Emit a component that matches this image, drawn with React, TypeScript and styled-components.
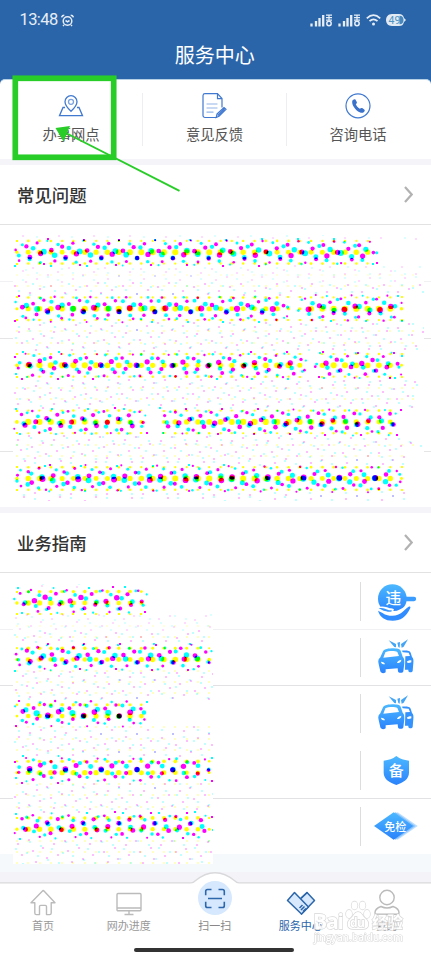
import React from 'react';
import styled, { createGlobalStyle } from 'styled-components';

const Global = createGlobalStyle`
  * { box-sizing: border-box; }
  body { margin: 0; background: #fff; font-family: "Noto Sans CJK SC", "Noto Sans", sans-serif; }
`;

const Screen = styled.div`
  position: relative;
  width: 431px;
  height: 955px;
  overflow: hidden;
  display: flex;
  flex-direction: column;
  background: #f5f9fb;
`;

const Header = styled.header`
  flex: none;
  height: 79px;
  background: #2b65a9;
  color: #fff;
`;

const StatusBar = styled.div`
  display: flex;
  align-items: center;
  height: 40px;
  padding: 0 25px 0 19.5px;
  color: #e6edf5;
`;

const Clock = styled.span`
  font: 400 16.5px/20px Roboto, sans-serif;
  letter-spacing: -0.6px;
  margin-right: 3.5px;
`;

const StatusIcons = styled.div`
  display: flex;
  align-items: center;
  gap: 5px;
  margin-left: auto;
`;

const Title = styled.h1`
  margin: 0;
  padding-right: 1.5px;
  font-size: 20px;
  font-weight: 400;
  line-height: 30px;
  text-align: center;
`;

const CardBack = styled.div`
  flex: none;
  background: #2b65a9;
`;

const QuickActions = styled.nav`
  display: grid;
  grid-template-columns: 143px 144px 1fr;
  height: 80px;
  padding: 13px 1px 0 0;
  background: #fff;
  border-top: 1px solid #b5d0e4;
  border-radius: 5px 5px 0 0;
`;

const QuickItem = styled.div<{ $divided?: boolean }>`
  display: flex;
  flex-direction: column;
  align-items: center;
  gap: 3px;
  height: 53px;
  border-right: 1px solid ${(p) => (p.$divided ? '#eeeef1' : 'transparent')};
  color: #555;
  font-size: 14.3px;
  line-height: 24px;
`;

const Gap = styled.div`
  flex: none;
  height: 6px;
  background: #f4f4f9;
`;

const SectionHead = styled.div`
  flex: none;
  display: flex;
  align-items: center;
  justify-content: space-between;
  height: 60px;
  padding: 0 18px 0 17px;
  background: #fff;
  border-bottom: 1px solid #e2e2e2;
`;

const SectionTitle = styled.h2`
  margin: 0;
  color: #333;
  font-size: 17.4px;
  font-weight: 500;
  line-height: 26px;
`;

const List = styled.div<{ $h: number }>`
  flex: none;
  position: relative;
  display: grid;
  grid-template-rows: repeat(5, 1fr);
  height: ${(p) => p.$h}px;
  background: #fff;
`;

const Row = styled.div<{ $line?: string }>`
  display: flex;
  align-items: center;
  justify-content: flex-end;
  padding-right: 11px;
  border-top: 1px solid ${(p) => p.$line ?? 'transparent'};
`;

const IconCell = styled.div`
  display: flex;
  align-items: center;
  height: 39px;
  padding-left: 11px;
  border-left: 1px solid #ddd;
`;

const DotLayer = styled.svg<{ $top: number }>`
  position: absolute;
  left: 13px;
  top: ${(p) => p.$top}px;
  background: #fff;
  isolation: isolate;
  g { mix-blend-mode: multiply; }
`;

const Footer = styled.footer`
  position: relative;
  flex: none;
  height: 83px;
  margin-top: auto;
  background: linear-gradient(#f3f3f8 0 11px, #fff 11px);
`;

const FooterEdge = styled.svg`
  position: absolute;
  left: 0;
  top: 0;
`;

const Tabs = styled.nav`
  position: relative;
  display: grid;
  grid-template-columns: repeat(5, 1fr);
  padding: 9px 1.5px 0 0;
`;

const Tab = styled.div<{ $color: string }>`
  display: flex;
  flex-direction: column;
  align-items: center;
  color: ${(p) => p.$color};
  font-size: 11px;
  line-height: 16px;
  white-space: nowrap;
  svg { display: block; }
`;

const HomeBar = styled.div`
  position: relative;
  width: 160px;
  height: 4px;
  margin: 15px 0 0 134px;
  border-radius: 2px;
  background: #333;
`;

const Overlay = styled.svg`
  position: absolute;
  left: 0;
  top: 0;
  pointer-events: none;
`;

/* ---- halftone screen ---- */

type Band = { y: number; spans: [number, number][] };
type Screened = { x: number; y: number; r: number; o: number };

const PERIOD = 11.314;
const inks = [
  { color: '#ff0', x: 16.9, y: 252.2, angle: 0 },
  { color: '#f0f', x: 133.7, y: 247.2, angle: -18 },
  { color: '#0ff', x: 33.1, y: 248.2, angle: 18 },
];

const profile: [number, number][] = [
  [0, 3], [2.5, 2.7], [5, 2.3], [8, 1.9], [11.5, 1.25], [13, 1.05], [14.5, 0.9],
];

function radiusAt(d: number) {
  for (let i = 1; i < profile.length; i++) {
    const [d0, r0] = profile[i - 1];
    const [d1, r1] = profile[i];
    if (d <= d1) return r0 + ((r1 - r0) * (d - d0)) / (d1 - d0);
  }
  return 0;
}

function screen(ink: (typeof inks)[number], box: number[], bands: Band[], paleEnds: number[]): Screened[] {
  const [x0, y0, x1, y1] = box;
  const t = (ink.angle * Math.PI) / 180;
  const ux = PERIOD * Math.cos(t);
  const uy = PERIOD * Math.sin(t);
  const out: Screened[] = [];
  for (let a = -70; a < 70; a++) {
    for (let b = -70; b < 70; b++) {
      const x = ink.x + a * ux - b * uy;
      const y = ink.y + a * uy + b * ux;
      if (x < x0 + 1 || x > x1 || y < y0 || y > y1) continue;
      let n = 0;
      bands.forEach((band, i) => {
        if (Math.abs(band.y - y) < Math.abs(bands[n].y - y)) n = i;
      });
      const d = Math.abs(bands[n].y - y);
      const span = bands[n].spans.find(([l, r]) => x >= l && x <= r);
      if (d < 13.8 && span) {
        const edge = Math.min(x - span[0], span[1] - x);
        const k = Math.min(1, 0.5 + edge / 22);
        const wobble = 0.93 + 0.1 * Math.sin(x * 0.53 + y * 0.31);
        out.push({ x, y, r: Math.max(0.85, radiusAt(d) * k * wobble), o: 1 });
      } else if (d >= 13.8 && x < paleEnds[n]) {
        const firstGap = y < bands[0].y + 30;
        out.push({ x, y, r: 1, o: firstGap ? 0.14 : 0.25 });
      }
    }
  }
  return out;
}

function Halftone({ box, top, bands, paleEnds }: { box: number[]; top: number; bands: Band[]; paleEnds: number[] }) {
  const [x0, y0, x1, y1] = box;
  const w = x1 - x0;
  const h = y1 - y0;
  return (
    <DotLayer $top={top} width={w} height={h} viewBox={`${x0} ${y0} ${w} ${h}`}>
      {inks.map((ink) => (
        <g key={ink.color} fill={ink.color}>
          {screen(ink, box, bands, paleEnds).map((p, i) =>
            p.r <= 1 ? (
              <rect key={i} x={Math.round(p.x - 1)} y={Math.round(p.y - 1)} width={2} height={2} opacity={p.o} />
            ) : (
              <circle key={i} cx={p.x} cy={p.y} r={p.r} />
            ),
          )}
        </g>
      ))}
    </DotLayer>
  );
}

const faqBands: Band[] = [
  { y: 252.5, spans: [[14, 377]] },
  { y: 308.7, spans: [[14, 290], [298, 403]] },
  { y: 365.5, spans: [[14, 307], [314, 403]] },
  { y: 421.8, spans: [[14, 147], [159, 401]] },
  { y: 478.6, spans: [[14, 402]] },
];

const guideBands: Band[] = [
  { y: 600.5, spans: [[14, 149]] },
  { y: 657, spans: [[14, 213]] },
  { y: 713.2, spans: [[14, 149]] },
  { y: 769.6, spans: [[14, 213]] },
  { y: 826, spans: [[14, 213]] },
];

/* ---- icons ---- */

const Chevron = () => (
  <svg width="9" height="17" viewBox="0 0 9 17" fill="none" stroke="#b2b2b2" strokeWidth="2.2">
    <path d="M1 1 7.7 8.5 1 16" />
  </svg>
);

const Blue = () => (
  <defs>
    <linearGradient id="blue" x1="0" y1="0" x2="0" y2="1">
      <stop offset="0" stopColor="#4bb8ff" />
      <stop offset="1" stopColor="#2a82fc" />
    </linearGradient>
  </defs>
);

const glyph = {
  fontFamily: 'Noto Sans CJK SC, sans-serif',
  fill: '#fff',
  textAnchor: 'middle' as const,
};

const ViolationIcon = () => (
  <svg width="48" height="48" viewBox="66 20 144 144">
    <Blue />
    <circle cx="127" cy="82" r="43" fill="url(#blue)" />
    <path d="M166 83h26" stroke="#3a9cfe" strokeWidth="13" strokeLinecap="round" />
    <path d="M82 108c14-5 26-2 37 3 12 0 16 4 10 8 14 1 24-6 38-16 8-5 18-2 16 5-12 24-30 35-55 34-24-1-40-12-46-34Z" fill="#fff" />
    <path d="M86 111c11-3 19 0 31 6 10-1 13 3 4 4-9 1-14-3-20-3" fill="#3996fe" />
    <path d="M84 118c17 7 20 15 43 15 26 0 34-17 49-27 5-2 7 1 4 6-13 25-28 36-52 36-23 0-38-10-44-30Z" fill="#318dff" />
    <text {...glyph} x="130" y="98" fontSize="47" fontWeight="500">违</text>
  </svg>
);

const CrashIcon = () => (
  <svg width="48" height="48" viewBox="66 190 144 144">
    <Blue />
    <path d="m116 209 22 11v10l-5-1ZM174 206l-21 14 2 11 6-3ZM142 216l8-2-1 17-4-2Z" fill="#43a5f5" />
    <path
      fill="url(#blue)"
      fillRule="evenodd"
      d="M91 260l8-18c3-5 9-8 27-9 16 0 23 2 26 7l6 18c5 4 5 10 5 20l-3 24c-1 6-15 6-16 0l-1-9-36 3v7c-1 6-15 6-16-1l-5-22c-3-10 0-16 5-20Zm9 1 47-5-5-12c-6-4-28-4-36 1ZM93 273c0 5 4 8 12 8-1-5-5-8-12-8Zm61-6c-8 1-12 5-13 10 8 0 13-3 13-10Z"
    />
    <path
      fill="#3392fd"
      fillRule="evenodd"
      d="M155 240c16-1 24 0 27 6l4 13c4 4 5 9 4 18l-2 24c-1 5-12 5-13 0v-4h-10l1-40 14-1-4-10-17-1Zm15 34c3 4 8 4 14 1v-6c-8 0-12 2-14 5Z"
    />
  </svg>
);

const ShieldIcon = () => (
  <svg width="48" height="48" viewBox="66 79 144 144">
    <Blue />
    <path d="M139 109c12 9 22 12 38 14v36c0 20-18 29-38 37-20-8-38-17-38-37v-36c16-2 26-5 38-14Z" fill="url(#blue)" />
    <text {...glyph} x="139" y="170" fontSize="45" fontWeight="500">备</text>
  </svg>
);

const ExemptIcon = () => (
  <svg width="48" height="48" viewBox="66 245 144 144">
    <Blue />
    <path d="m143 276 60 41-60 41-60-41Z" fill="#b9dcff" />
    <path d="m137 276 59 41-59 41-59-41Z" fill="#83c0fb" />
    <path d="m131 276 59 41-59 41-59-41Z" fill="url(#blue)" />
    <text {...glyph} x="136" y="331" fontSize="33" fontWeight="500">免检</text>
  </svg>
);

const Signal = () => (
  <svg width="23" height="13" viewBox="0 0 23 13" stroke="#e6edf5" fill="none">
    <path d="M1.5 9.500v3M6 7v5.500M9.500 4v8.500M13.200 1v11.500" strokeWidth="2.300" />
    <path d="M16 1.200h6M16 3.700h6M16 6.200h6M19 1v5" strokeWidth="1.200" />
    <circle cx="19" cy="9.500" r="2.200" strokeWidth="1.500" />
  </svg>
);

const rows = [
  { icon: <ViolationIcon /> },
  { icon: <CrashIcon />, line: '#f1f1f3' },
  { icon: <CrashIcon />, line: '#e2e2e4' },
  { icon: <ShieldIcon /> },
  { icon: <ExemptIcon />, line: '#e2e2e4' },
];

export default function App() {
  return (
    <Screen>
      <Global />
      <Header>
        <StatusBar>
          <Clock>13:48</Clock>
          <svg width="13" height="13" viewBox="0 0 13 13" fill="none" stroke="#e6edf5" strokeWidth="1.500">
            <circle cx="6.500" cy="7" r="4.300" />
            <path d="M.6 3.300Q1 1.400 3.300 1.300M12.400 3.300Q12 1.400 9.700 1.300M4.500 6.500l2 1.300 2-1.300M3 11l-1 1M10 11l1 1" />
          </svg>
          <StatusIcons>
            <Signal />
            <Signal />
            <svg width="15" height="12" viewBox="0 0 15 12" fill="none" stroke="#e6edf5" strokeWidth="1.800">
              <path d="M.8 4.300Q7.500-2 14.200 4.300M3.500 7.200Q7.500 3.600 11.500 7.200" />
              <circle cx="7.500" cy="10" r="1.500" fill="#e6edf5" stroke="none" />
            </svg>
            <svg width="20" height="12" viewBox="0 0 20 12">
              <path d="M6 0h7c3 0 4 1 5 4l2 2-2 2c-1 3-2 4-5 4H6C-2 12-2 0 6 0Z" fill="#e2ebf3" />
              <path d="M13.500 1.700c3 0 4 2 4 4.300s-1 4.300-4 4.300Z" fill="#4787bd" />
              <text x="8.500" y="9.700" fontFamily="Roboto, sans-serif" fontSize="10.500" textAnchor="middle" fill="#5194c3">49</text>
            </svg>
          </StatusIcons>
        </StatusBar>
        <Title>服务中心</Title>
      </Header>

      <CardBack>
        <QuickActions>
          <QuickItem $divided>
            <svg width="26" height="26" viewBox="0 0 26 26" fill="none" stroke="#4179d0" strokeWidth="1.300">
              <path d="M7 14.500H5L1.500 22.700h23L21 14.500h-2" />
              <path d="M13 18.300C9 14.500 7 11.500 7 8.700a6 6 0 0 1 12 0c0 2.800-2 5.800-6 9.600Z" />
              <circle cx="13" cy="8.800" r="2.500" stroke="#79a2df" />
            </svg>
            办事网点
          </QuickItem>
          <QuickItem $divided>
            <svg width="28" height="26" viewBox="0 0 28 26" fill="none" stroke="#4179d0" strokeWidth="1.200">
              <path d="M16 24.500H4A2 2 0 0 1 2 22.500v-20A2 2 0 0 1 4 .700h12.500L21 5.500v9M16.500.700v5H21" />
              <path d="M5.500 11h11M5.500 15h11M5.500 19.200h7" stroke="#92b6e8" />
              <path d="m16 21 7-6.500 2 1.700-7 7-2.800 1.300ZM23.800 15.500l-7 7" />
            </svg>
            意见反馈
          </QuickItem>
          <QuickItem>
            <svg width="26" height="26" viewBox="0 0 26 26">
              <circle cx="13" cy="12.800" r="12" fill="none" stroke="#4179d0" strokeWidth="1.200" />
              <path d="M7.300 7.800c.5-1.200 2.400-2.200 3.100-1.300l1.400 2.400c.4 1-.2 1.500-1 2.200.8 2.200 2 3.600 4 4.700.9-.6 1.600-1.200 2.400-.7l2 1.400c1 .8.600 1.600-.5 2.700-1.500 1.300-4.200.3-6.300-1.300-3-2.300-5.900-6.500-5.100-10.100Z" fill="#3c73ca" />
            </svg>
            咨询电话
          </QuickItem>
        </QuickActions>
      </CardBack>

      <Gap />
      <SectionHead>
        <SectionTitle>常见问题</SectionTitle>
        <Chevron />
      </SectionHead>
      <List $h={282}>
        <Row />
        <Row $line="#f1f1f3" />
        <Row $line="#e5e5e5" />
        <Row />
        <Row $line="#e5e5e5" />
        <Halftone box={[13, 235, 424, 501]} top={10} bands={faqBands} paleEnds={[421, 424, 418, 422, 405]} />
      </List>

      <Gap />
      <SectionHead>
        <SectionTitle>业务指南</SectionTitle>
        <Chevron />
      </SectionHead>
      <List $h={281}>
        {rows.map((row, i) => (
          <Row key={i} $line={row.line}>
            <IconCell>{row.icon}</IconCell>
          </Row>
        ))}
        <Halftone box={[13, 584, 213, 864]} top={11} bands={guideBands} paleEnds={[213, 213, 213, 213, 213]} />
      </List>

      <Footer>
        <FooterEdge width="431" height="83" viewBox="0 0 431 83">
          <path d="M-2 10.800H191Q193.500 10.800 195 9Q215 -7.500 235 9Q236.500 10.800 239 10.800H433V90H-2Z" fill="#fff" stroke="#d9d9dc" strokeWidth="1.300" />
        </FooterEdge>
        <Tabs>
          <Tab $color="#999">
            <svg width="28" height="36" viewBox="0 0 28 36" fill="none" stroke="#bbb" strokeWidth="1.400" strokeLinejoin="round">
              <path d="M14 9.500 2 21.800h3.800V32q0 1.600 1.600 1.600h3.100v-8q0-1.200 1.200-1.200h4.600q1.200 0 1.200 1.200v8h3.100q1.600 0 1.600-1.600V21.800H26L15 10Z" />
            </svg>
            首页
          </Tab>
          <Tab $color="#999">
            <svg width="28" height="36" viewBox="0 0 28 36" fill="none" stroke="#bbb" strokeWidth="1.400">
              <rect x="2" y="12.500" width="24" height="17.300" rx="1" />
              <path d="M2 27h24M14 30v3.500M9.500 33.500h9" />
            </svg>
            网办进度
          </Tab>
          <Tab $color="#888">
            <svg width="36" height="36" viewBox="0 0 36 36" fill="none" stroke="#2c66ab" strokeWidth="1.600">
              <circle cx="18" cy="17" r="17" fill="#d6e8fd" stroke="none" />
              <path d="M14.500 8.500h-4q-1.800 0-1.800 1.800v4M21.500 8.500h4q1.800 0 1.800 1.800v4M14.500 26.500h-4q-1.800 0-1.800-1.800v-4M21.500 26.500h4q1.800 0 1.800-1.800v-4M11 17.500h14" />
            </svg>
            扫一扫
          </Tab>
          <Tab $color="#2b65a9">
            <svg width="30" height="36" viewBox="0 0 30 36" fill="#d8e9fd" stroke="#2c66ab" strokeWidth="1.500" strokeLinejoin="round">
              <path d="m15 17 6-5.500 7.500 8L15.500 33Z" />
              <path d="m8.500 11.500 14 14.500-7 7L1.500 19.500Z" />
              <path d="m15.500 17 6-5.700M13.500 27l3-3M15 29l3.500-3.500M17 30.500l3-3" fill="none" />
            </svg>
            服务中心
          </Tab>
          <Tab $color="#999">
            <svg width="28" height="36" viewBox="0 0 28 36" fill="none" stroke="#bbb" strokeWidth="1.400">
              <circle cx="14" cy="16.500" r="7.200" />
              <path d="M8 25.500Q14 28.500 20 25.500C24 27 26 29 26 31.500Q26 33.300 24 33.300H4Q2 33.300 2 31.500C2 29 4 27 8 25.500Z" />
            </svg>
            我的
          </Tab>
        </Tabs>
        <HomeBar />
      </Footer>

      <Overlay width="431" height="955" viewBox="0 0 431 955">
        <rect x="15.300" y="78.300" width="98.400" height="79" fill="none" stroke="#28cd28" strokeWidth="5.700" />
        <path d="M179.500 190.800 64 132" stroke="#28cd28" strokeWidth="1.900" />
        <path d="m55.500 128 14.500-2-6.500 15.500Z" fill="#28cd28" />
        <g fill="#fff" stroke="#d0d0d0" strokeWidth="1.300" opacity="0.850" fontWeight="700" paintOrder="stroke">
          <text x="313" y="929" fontFamily="Open Sans, sans-serif" fontSize="21" textLength="31">Bai</text>
          <ellipse cx="349" cy="914" rx="3" ry="4" />
          <ellipse cx="354.500" cy="905.500" rx="3" ry="4" />
          <ellipse cx="362.500" cy="905.500" rx="3" ry="4" />
          <ellipse cx="367" cy="914" rx="3" ry="4" />
          <path d="M358 912c4 0 4 4 8 7 4 4 3 10-3 10h-10c-6 0-7-6-3-10 4-3 4-7 8-7Z" />
          <text x="350" y="927" fontFamily="Open Sans, sans-serif" fontSize="12" textLength="15">du</text>
          <text x="372" y="928" fontFamily="Noto Sans CJK SC, sans-serif" fontSize="15.500">经验</text>
          <text x="314" y="941" fontFamily="Open Sans, sans-serif" fontSize="10.500" textLength="89" fontWeight="600" strokeWidth="1">jingyan.baidu.com</text>
        </g>
      </Overlay>
    </Screen>
  );
}
